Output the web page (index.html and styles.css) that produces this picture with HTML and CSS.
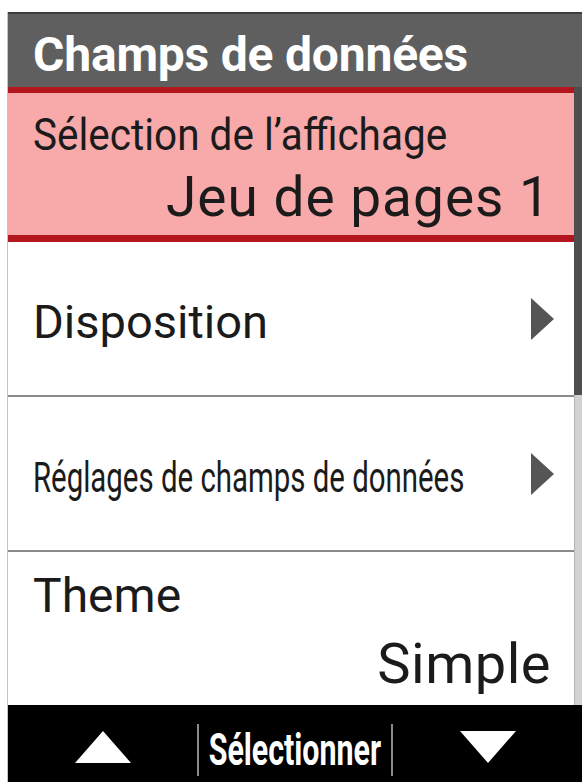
FILE: index.html
```html
<!DOCTYPE html>
<html lang="fr">
<head>
    <meta charset="UTF-8">
    <meta name="viewport" content="width=device-width, initial-scale=1.0">
    <title>Champs de données</title>
    <link rel="stylesheet" href="styles.css">
</head>
<body>

    <div class="screen">
        <div class="title-bar">Champs de données</div>

        <div class="menu">
            <div class="menu-list">
                <div class="item item-selected">
                    <div class="item-label"><span class="narrow">Sélection de l’affichage</span></div>
                    <div class="item-value value-big">Jeu de pages 1</div>
                </div>
                <div class="item item-link">
                    <div class="item-label">Disposition</div>
                    <div class="arrow"></div>
                </div>
                <div class="item item-link">
                    <div class="item-label"><span class="condensed">Réglages de champs de données</span></div>
                    <div class="arrow"></div>
                </div>
                <div class="item item-last">
                    <div class="item-label">Theme</div>
                    <div class="item-value">Simple</div>
                </div>
            </div>
            <div class="scrollbar">
                <div class="scroll-thumb"></div>
                <div class="scroll-track"></div>
            </div>
        </div>

        <div class="button-bar">
            <div class="btn-cell"><div class="tri tri-up"></div></div>
            <div class="btn-select"><span>Sélectionner</span></div>
            <div class="btn-cell"><div class="tri tri-down"></div></div>
        </div>
    </div>

</body>
</html>
```

FILE: styles.css
```css
body {
    margin: 0;
    background-color: #fff;
    font-family: Roboto, "Liberation Sans", sans-serif;
    color: #1b1b1b;
    overflow: hidden;
}

.screen {
    width: 575px;
    margin: 12px 0 0 7px;
    border-left: 1px solid #c4c4c4;
    box-sizing: border-box;
}

.title-bar {
    height: 75px;
    box-sizing: border-box;
    background-color: #5f5f5f;
    border-top: 2px solid #3c3c3c;
    color: #fff;
    font-size: 48px;
    font-weight: bold;
    line-height: 82px;
    padding-left: 25px;
    letter-spacing: -0.2px;
    overflow: hidden;
}

.menu {
    display: flex;
}

.menu-list {
    flex: 1;
    min-width: 0;
}

.item {
    box-sizing: border-box;
    padding: 0 23px 0 25px;
    border-bottom: 2px solid #8a8a8a;
}

.item-selected {
    height: 155px;
    background-color: #f8a9aa;
    border-top: 6px solid #b3161d;
    border-bottom: 7px solid #b3161d;
    padding-top: 16px;
}

.item-link {
    height: 155px;
    display: flex;
    align-items: center;
    justify-content: space-between;
}

.item-last {
    height: 153px;
    border-bottom: none;
    padding-top: 18px;
}

.item-label {
    font-size: 44px;
    line-height: 52px;
    white-space: nowrap;
}

.item-link .item-label {
    flex: 1;
    min-width: 0;
    overflow: hidden;
    font-size: 47px;
    padding-top: 6px;
}

.item-last .item-label {
    font-size: 48px;
}

.item-value {
    font-size: 56px;
    line-height: 60px;
    text-align: right;
    margin-top: 12px;
    letter-spacing: 0.5px;
}

.value-big {
    font-size: 55px;
    letter-spacing: 1px;
    margin-top: 6px;
}

.narrow {
    display: inline-block;
    transform: scaleX(0.92);
    transform-origin: left center;
}

.condensed {
    display: inline-block;
    font-size: 42px;
    transform: scaleX(0.7);
    transform-origin: left center;
}

.arrow {
    flex-shrink: 0;
    width: 0;
    height: 0;
    border-top: 21px solid transparent;
    border-bottom: 21px solid transparent;
    border-left: 23px solid #555;
    margin-right: -3px;
}

.scrollbar {
    width: 8px;
    display: flex;
    flex-direction: column;
}

.scroll-thumb {
    height: 308px;
    background-color: #4e4e4e;
}

.scroll-track {
    flex: 1;
    background-color: #d2d2d2;
    border-left: 1px solid #b5b5b5;
}

.button-bar {
    height: 77px;
    background-color: #000;
    display: flex;
    align-items: center;
}

.btn-cell {
    flex: 1;
    display: flex;
    justify-content: center;
    padding-top: 6px;
}

.btn-select {
    width: 192px;
    height: 52px;
    margin-top: 13px;
    border-left: 2px solid #8a8a8a;
    border-right: 2px solid #8a8a8a;
    display: flex;
    justify-content: center;
    align-items: center;
    overflow: hidden;
}

.btn-select span {
    color: #fff;
    font-size: 44px;
    font-weight: bold;
    white-space: nowrap;
    transform: scaleX(0.69);
}

.tri {
    width: 0;
    height: 0;
    border-left: 28px solid transparent;
    border-right: 28px solid transparent;
}

.tri-up {
    border-bottom: 32px solid #fff;
}

.tri-down {
    border-top: 32px solid #fff;
}
```
